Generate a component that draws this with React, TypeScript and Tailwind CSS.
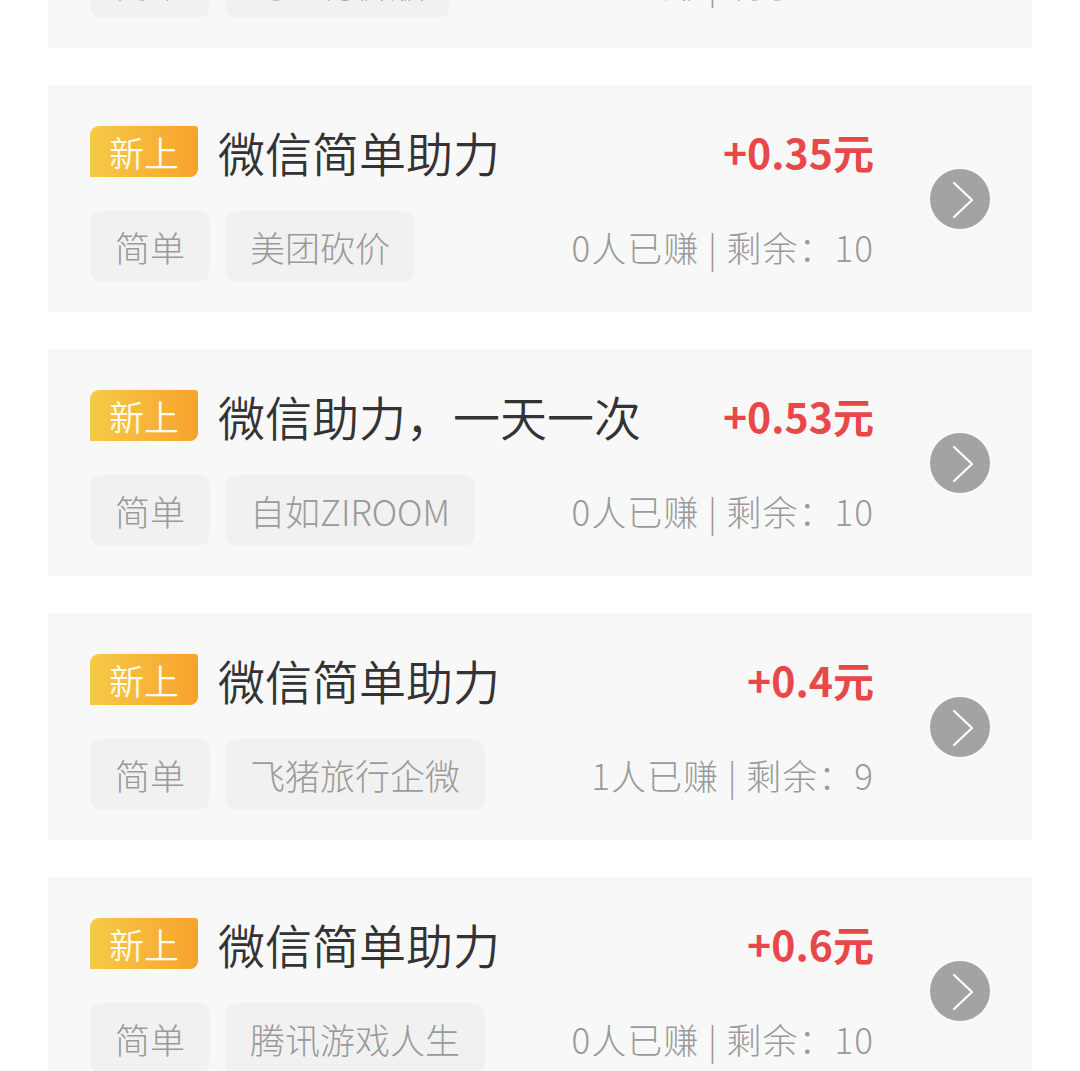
type Task = {
  title: string;
  price: string;
  tag: string;
  earned: number;
  left: number;
};

const tasks: Task[] = [
  { title: "微信简单助力", price: "+0.3元", tag: "淘宝特价版", earned: 0, left: 10 },
  { title: "微信简单助力", price: "+0.35元", tag: "美团砍价", earned: 0, left: 10 },
  { title: "微信助力，一天一次", price: "+0.53元", tag: "自如ZIROOM", earned: 0, left: 10 },
  { title: "微信简单助力", price: "+0.4元", tag: "飞猪旅行企微", earned: 1, left: 9 },
  { title: "微信简单助力", price: "+0.6元", tag: "腾讯游戏人生", earned: 0, left: 10 },
];

function TaskCard({ task }: { task: Task }) {
  return (
    <div className="flex bg-[#f8f8f8] pl-[42px] pr-[42px]">
      <div className="flex-1 pt-[41px] pb-[30px]">
        <div className="flex h-[51px] items-center">
          <span className="flex h-[51px] w-[108px] shrink-0 items-center justify-center rounded-tl-[9px] rounded-tr-[3px] rounded-br-[8px] rounded-bl-[1px] bg-gradient-to-r from-[#f6ca46] to-[#f6a22c] text-[35px] font-[350] leading-none text-[#fffaf0]">
            新上
          </span>
          <span className="ml-[20px] flex-1 whitespace-nowrap text-[47px] font-[350] leading-none text-[#333333]">
            {task.title}
          </span>
          <span className="whitespace-nowrap text-[41px] font-bold leading-none text-[#e8484a]">
            {task.price}
          </span>
        </div>
        <div className="mt-[34px] flex h-[71px] items-center">
          <span className="flex h-[71px] items-center rounded-[12px] bg-[#f1f1f1] px-[25px] text-[35px] font-light leading-none text-[#9a9a9a]">
            简单
          </span>
          <span className="ml-[15px] flex h-[71px] items-center rounded-[12px] bg-[#f1f1f1] px-[25px] text-[35px] font-light leading-none text-[#9a9a9a]">
            {task.tag}
          </span>
          <span className="ml-auto whitespace-nowrap text-[35px] font-light leading-none tracking-[1px] text-[#9a9a9a]">
            {task.earned}人已赚 | 剩余：{task.left}
          </span>
        </div>
      </div>
      <div className="ml-[56px] flex h-[60px] w-[60px] shrink-0 items-center justify-center self-center rounded-full bg-[#a3a3a3]">
        <svg width="60" height="60" viewBox="0 0 60 60" fill="none">
          <path d="M24 14 L42 31 L24 48" stroke="white" strokeWidth="2.2" strokeLinecap="round" strokeLinejoin="round" />
        </svg>
      </div>
    </div>
  );
}

export default function App() {
  return (
    <div className="h-[1071px] overflow-hidden bg-white font-['Noto_Sans_CJK_SC','Noto_Sans',sans-serif]">
      <div className="-mt-[179px] flex flex-col gap-[37px] px-[48px]">
        {tasks.map((t, i) => (
          <TaskCard key={i} task={t} />
        ))}
      </div>
    </div>
  );
}
